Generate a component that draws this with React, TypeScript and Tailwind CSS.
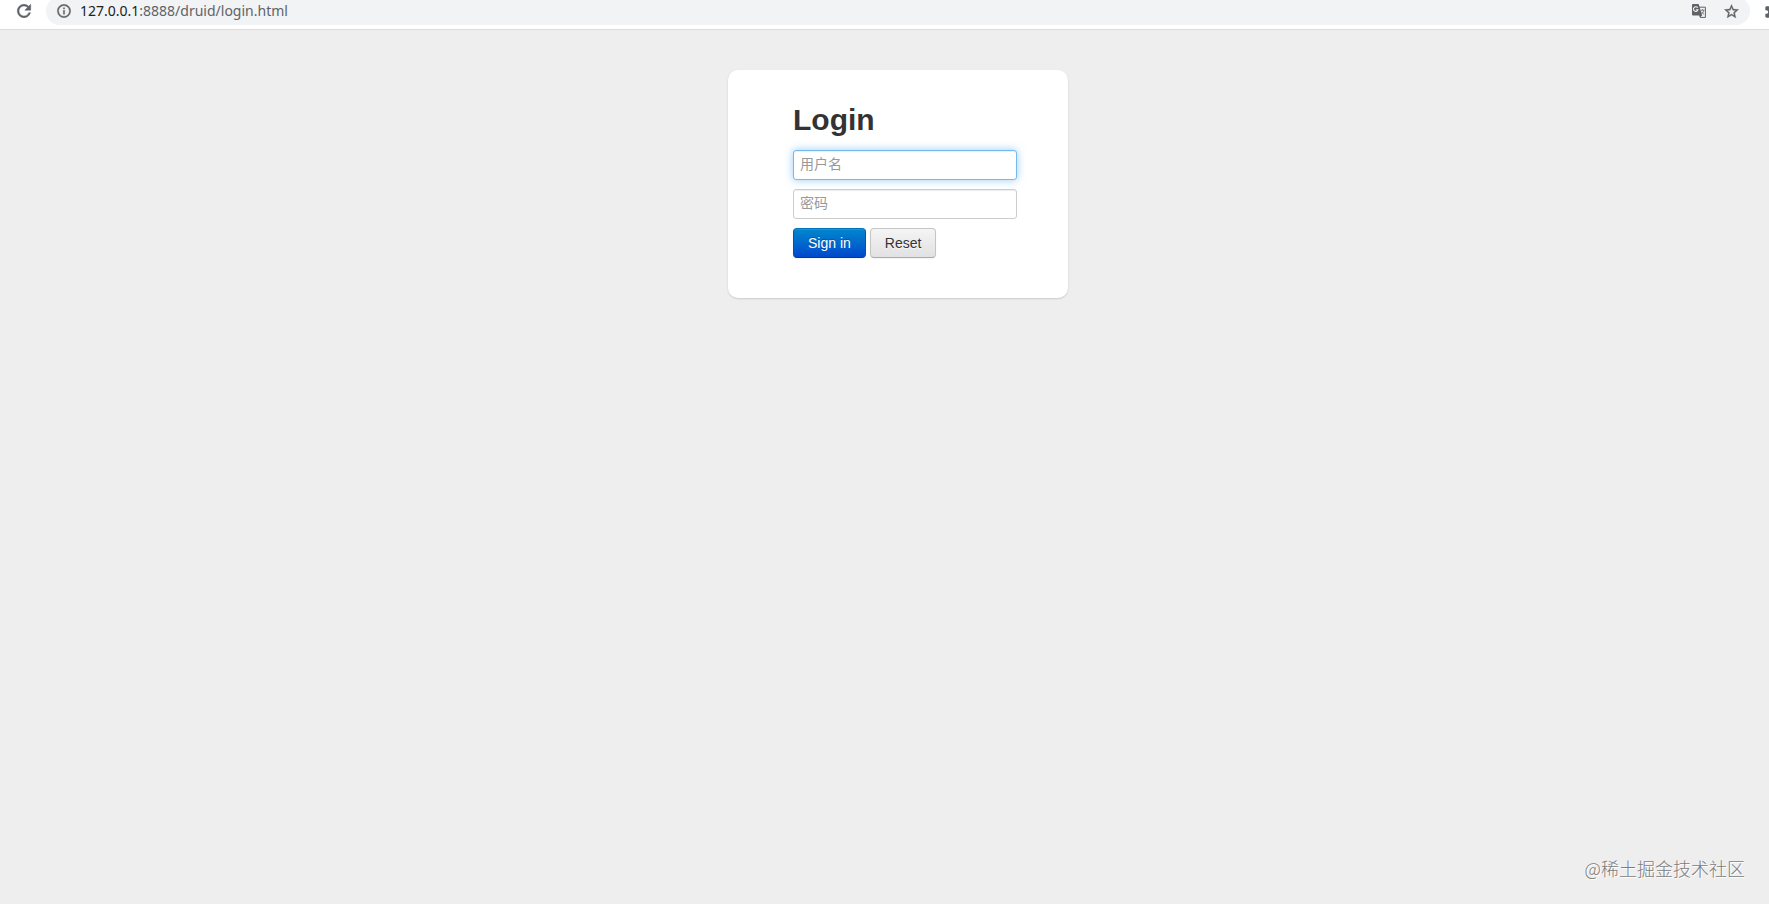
import { MdExtension } from "react-icons/md";

function ReloadIcon() {
  return (
    <svg width="20" height="20" viewBox="0 0 24 24" fill="currentColor" stroke="currentColor" strokeWidth="0.6" aria-hidden="true">
      <path d="M17.65 6.35A7.958 7.958 0 0 0 12 4c-4.42 0-7.99 3.58-7.99 8s3.57 8 7.99 8c3.73 0 6.84-2.55 7.73-6h-2.08A5.99 5.99 0 0 1 12 18c-3.31 0-6-2.69-6-6s2.69-6 6-6c1.66 0 3.14.69 4.22 1.78L13 11h7V4l-2.35 2.35z" />
    </svg>
  );
}

function InfoIcon() {
  return (
    <svg width="16" height="16" viewBox="0 0 24 24" fill="currentColor" stroke="currentColor" strokeWidth="0.5" aria-hidden="true">
      <path d="M11 7h2v2h-2zm0 4h2v6h-2zm1-9C6.48 2 2 6.48 2 12s4.48 10 10 10 10-4.48 10-10S17.52 2 12 2zm0 18c-4.41 0-8-3.59-8-8s3.59-8 8-8 8 3.59 8 8-3.59 8-8 8z" />
    </svg>
  );
}

function StarIcon() {
  return (
    <svg width="17" height="17" viewBox="0 0 24 24" fill="currentColor" stroke="currentColor" strokeWidth="0.5" aria-hidden="true">
      <path d="m22 9.24-7.19-.62L12 2 9.19 8.63 2 9.24l5.46 4.73L5.82 21 12 17.27 18.18 21l-1.63-7.03L22 9.24zM12 15.4l-3.76 2.27 1-4.28-3.32-2.88 4.38-.38L12 6.1l1.71 4.04 4.38.38-3.32 2.88 1 4.28L12 15.4z" />
    </svg>
  );
}

function TranslateIcon() {
  return (
    <svg width="16" height="16" viewBox="0 0 16 16" fill="none" aria-hidden="true">
      <path d="M7 4.2h7.4v10.2H9.2z" fill="#f1f3f4" stroke="#5f6368" strokeWidth="1" strokeLinejoin="round" />
      <path d="M2 1h5.6l3.6 11.4H2a1 1 0 0 1-1-1V2a1 1 0 0 1 1-1z" fill="#5f6368" />
      <path d="M8.6 12h2.6l-2 2.4z" fill="#5f6368" />
      <path d="M6.7 4.8A2.3 2.3 0 1 0 7 6.7H4.9" stroke="#f1f3f4" strokeWidth="1.1" />
      <path d="M9.6 7.2h3.9M11.6 6.2v1M12.8 7.4c-.3 1.5-1 2.6-2.1 3.4M10.6 8.8c.6 1.1 1.4 1.9 2.5 2.6" stroke="#5f6368" strokeWidth="0.8" />
    </svg>
  );
}

function BrowserBar() {
  return (
    <header className="flex h-[30px] shrink-0 items-start overflow-hidden border-b border-[#d9dddd] bg-white text-[#5f6368]">
      <div className="-mt-[3px] flex h-7 w-full items-center pl-3.5">
        <button type="button" aria-label="Reload" className="mr-3 flex size-5 shrink-0 items-center justify-center">
          <ReloadIcon />
        </button>
        <div className="flex h-7 min-w-0 grow items-center rounded-full bg-[#f1f3f4] px-2.5">
          <button type="button" aria-label="Site information" className="mr-2 shrink-0">
            <InfoIcon />
          </button>
          <div className="grow truncate font-['Noto_Sans',sans-serif] text-[14px] leading-5">
            <span className="text-[#202124]">127.0.0.1</span>
            <span>:8888/druid/login.html</span>
          </div>
          <button type="button" aria-label="Translate this page" className="mr-4 shrink-0">
            <TranslateIcon />
          </button>
          <button type="button" aria-label="Bookmark this page" className="shrink-0">
            <StarIcon />
          </button>
        </div>
        <div className="ml-3.5 w-[5px] shrink-0 overflow-hidden">
          <button type="button" aria-label="Extensions" className="block">
            <MdExtension size={16} />
          </button>
        </div>
      </div>
    </header>
  );
}

const field =
  "h-[30px] w-full rounded-[3px] border px-1.5 pb-0.5 text-[14px] bg-white text-[#555555] outline-none placeholder:text-[#999999]";
const resting = "border-[#cccccc] shadow-[inset_0_1px_1px_rgba(0,0,0,0.075)]";
const focused =
  "border-[#75b9ef] shadow-[inset_0_1px_1px_rgba(0,0,0,0.075),0_0_8px_rgba(82,168,236,0.6)]";

function LoginCard() {
  return (
    <section className="w-[340px] rounded-[10px] bg-white pt-[30px] pr-[51px] pb-10 pl-[65px] shadow-[0_1px_2px_rgba(0,0,0,0.15)]">
      <h2 className="mb-2.5 text-[30px] leading-10 font-bold text-[#333333]">Login</h2>
      <form className="flex flex-col gap-[9px]" onSubmit={(e) => e.preventDefault()}>
        <input type="text" aria-label="用户名" placeholder="用户名" className={`${field} ${focused}`} />
        <input type="password" aria-label="密码" placeholder="密码" className={`${field} ${resting}`} />
        <div className="flex gap-1">
          <button
            type="submit"
            className="h-[30px] rounded-[4px] border border-[#0050c0] border-t-[#0071bb] border-b-[#003a9e] bg-linear-to-b from-[#0088cc] to-[#0044cc] bg-origin-border px-3.5 text-[14px] text-white shadow-[inset_0_1px_0_rgba(255,255,255,0.1),0_1px_2px_rgba(0,0,0,0.05)] text-shadow-[0_-1px_0_rgba(0,0,0,0.25)]"
          >
            Sign in
          </button>
          <button
            type="reset"
            className="h-[30px] rounded-[4px] border border-[#c5c5c5] border-b-[#a9a9a9] bg-linear-to-b from-[#f5f5f5] to-[#e1e1e3] bg-origin-border px-3.5 text-[14px] text-[#333333] shadow-[inset_0_1px_0_rgba(255,255,255,0.2),0_1px_2px_rgba(0,0,0,0.05)] text-shadow-[0_1px_1px_rgba(255,255,255,0.75)]"
          >
            Reset
          </button>
        </div>
      </form>
    </section>
  );
}

export default function App() {
  return (
    <div className="flex min-h-screen flex-col bg-[#eeeeee] font-['Liberation_Sans','Noto_Sans_CJK_SC',sans-serif]">
      <BrowserBar />
      <main className="flex grow justify-center pt-10 pl-[27px]">
        <div>
          <LoginCard />
        </div>
      </main>
      <footer className="flex justify-end pr-6 pb-6 font-['Noto_Sans_CJK_SC',sans-serif] text-[18px] leading-6 font-light text-[#7c7c7c] text-shadow-[1px_1px_0_#ffffff]">
        @稀土掘金技术社区
      </footer>
    </div>
  );
}
